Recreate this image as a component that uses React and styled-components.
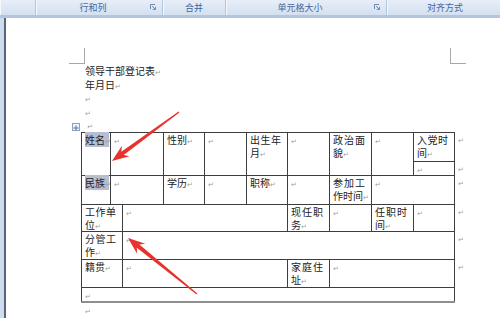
import React from 'react';
import styled, { createGlobalStyle } from 'styled-components';

const GlobalStyle = createGlobalStyle`
  html, body {
    margin: 0;
    padding: 0;
    background: #fff;
  }
  body {
    font-family: "Noto Sans CJK SC", "Noto Sans", sans-serif;
  }
`;

const Screen = styled.div`
  position: relative;
  width: 500px;
  height: 318px;
  overflow: hidden;
  display: flex;
  flex-direction: column;
  background: #fff;
`;

const Ribbon = styled.div`
  display: flex;
  flex-shrink: 0;
  height: 15px;
  background: linear-gradient(#e7eef8, #d4e0f0);
  border-bottom: 3px solid #b4c6de;
`;

const Group = styled.div`
  display: flex;
  flex-shrink: 0;
  width: ${p => p.$w}px;
  border-right: 1px solid #b5c6dc;
  box-shadow: inset 1px 0 0 #f5f8fd;
`;

const GroupLabel = styled.div`
  flex: 1;
  text-align: center;
  font-size: 9px;
  line-height: 15px;
  color: #45659a;
  white-space: nowrap;
`;

const Launcher = styled.div`
  width: 12px;
  padding-top: 3px;
  line-height: 0;
`;

const Workspace = styled.div`
  flex: 1;
  display: flex;
`;

const Rail = styled.div`
  width: 4px;
  flex-shrink: 0;
  background: #cfdbea;
  border-right: 2px solid #56657f;
`;

const Page = styled.div`
  flex: 1;
  display: flex;
  flex-direction: column;
  padding-top: 30px;
  background: #fff;
`;

const CornerRow = styled.div`
  display: flex;
  justify-content: space-between;
  width: 397px;
  height: 16px;
  margin-left: 63px;
`;

const CornerMark = styled.div`
  width: 15px;
  height: 15px;
  border-bottom: 1px solid #a8a8a8;
  ${p => (p.$side === 'left' ? 'border-right' : 'border-left')}: 1px solid #a8a8a8;
`;

const Para = styled.div`
  margin-left: 79px;
  height: 13.5px;
  font-size: 10px;
  line-height: 13.5px;
  color: #222;
  &:first-of-type {
    margin-top: 1px;
  }
`;

const Mark = styled.span`
  display: inline-block;
  width: 0;
  line-height: 0;
  overflow: visible;
  white-space: nowrap;
  font-family: "DejaVu Sans", sans-serif;
  font-size: 7px;
  color: #9e9e9e;
`;

const Highlight = styled.span`
  background: #b6bed1;
  white-space: nowrap;
  padding-right: 4px;
`;

const TableWrap = styled.div`
  position: relative;
  align-self: flex-start;
  margin-left: 75px;
`;

const Handle = styled.div`
  position: absolute;
  left: -9px;
  top: -9px;
  width: 6px;
  height: 6px;
  border: 1px solid #8ba1c6;
  background: #eef3fb;
  line-height: 0;
`;

const Table = styled.table`
  border-collapse: collapse;
  table-layout: fixed;
  width: 385px;
`;

const Row = styled.tr`
  height: ${p => p.$h}px;
`;

const Cell = styled.td`
  border: 1px solid #3d3d3d;
  ${p => p.$last && 'border-bottom: 2px solid #8e8e8e;'}
  padding: 0 6px 0 3px;
  vertical-align: top;
  font-size: 10px;
  line-height: 13px;
  color: #222;
  text-align: justify;
`;

const EndCell = styled.td`
  border: none;
  padding: 0 0 0 3px;
  vertical-align: top;
  font-size: 10px;
  line-height: 13px;
`;

const Overlay = styled.svg`
  position: absolute;
  left: 0;
  top: 0;
  pointer-events: none;
`;

const RET = '\u21B5';

function LauncherIcon() {
  return (
    <svg width="6" height="6" viewBox="0 0 6 6" fill="none" stroke="#7389b0" strokeWidth="1">
      <path d="M0.5 5V0.5H5" />
      <path d="M2 2L5.2 5.2M5.5 2.8V5.5H2.8" />
    </svg>
  );
}

function MoveIcon() {
  return (
    <svg width="6" height="6" viewBox="0 0 6 6" fill="none" stroke="#5670a0" strokeWidth="1">
      <path d="M3 0.5V5.5M0.5 3H5.5" />
    </svg>
  );
}

function Label({ text, selected, ...rest }) {
  return (
    <Cell {...rest}>
      {selected ? (
        <Highlight>
          {text}
          <Mark>{RET}</Mark>
        </Highlight>
      ) : (
        <>
          {text}
          <Mark>{RET}</Mark>
        </>
      )}
    </Cell>
  );
}

function Blank(props) {
  return (
    <Cell {...props}>
      <Mark>{RET}</Mark>
    </Cell>
  );
}

function RowEnd() {
  return (
    <EndCell>
      <Mark>{RET}</Mark>
    </EndCell>
  );
}

const colWidths = [29, 12, 41, 41, 42, 41, 42, 42, 42, 41, 12];

function arrowPoints(tx, ty, hx, hy) {
  const dx = hx - tx;
  const dy = hy - ty;
  const len = Math.hypot(dx, dy);
  const ux = dx / len;
  const uy = dy / len;
  const nx = -uy;
  const ny = ux;
  const bx = hx - ux * 17;
  const by = hy - uy * 17;
  const kx = hx - ux * 13;
  const ky = hy - uy * 13;
  const pts = [
    [tx + nx * 0.6, ty + ny * 0.6],
    [kx + nx * 2, ky + ny * 2],
    [bx + nx * 6.5, by + ny * 6.5],
    [hx, hy],
    [bx - nx * 6.5, by - ny * 6.5],
    [kx - nx * 2, ky - ny * 2],
    [tx - nx * 0.6, ty - ny * 0.6],
  ];
  return pts.map(p => p.map(v => v.toFixed(1)).join(',')).join(' ');
}

const arrows = [
  { tail: [179, 112], tip: [112, 161] },
  { tail: [197, 294], tip: [128, 238] },
];

export default function App() {
  return (
    <Screen>
      <GlobalStyle />
      <Ribbon>
        <Group $w={35}>
          <GroupLabel />
        </Group>
        <Group $w={126}>
          <GroupLabel>行和列</GroupLabel>
          <Launcher><LauncherIcon /></Launcher>
        </Group>
        <Group $w={62}>
          <GroupLabel>合并</GroupLabel>
        </Group>
        <Group $w={160}>
          <GroupLabel>单元格大小</GroupLabel>
          <Launcher><LauncherIcon /></Launcher>
        </Group>
        <Group $w={116}>
          <GroupLabel>对齐方式</GroupLabel>
        </Group>
        <Group $w={10}>
          <GroupLabel />
        </Group>
      </Ribbon>

      <Workspace>
        <Rail />
        <Page>
          <CornerRow>
            <CornerMark $side="left" />
            <CornerMark $side="right" />
          </CornerRow>
          <Para>领导干部登记表<Mark>{RET}</Mark></Para>
          <Para>年月日<Mark>{RET}</Mark></Para>
          <Para><Mark>{RET}</Mark></Para>
          <Para><Mark>{RET}</Mark></Para>
          <Para>&nbsp;<Mark>{RET}</Mark></Para>

          <TableWrap>
            <Handle><MoveIcon /></Handle>
            <Table>
              <colgroup>
                {colWidths.map((w, i) => (
                  <col key={i} style={{ width: w }} />
                ))}
              </colgroup>
              <tbody>
                <Row $h={29}>
                  <Label text="姓名" selected rowSpan={2} />
                  <Blank colSpan={2} rowSpan={2} />
                  <Label text="性别" rowSpan={2} />
                  <Blank rowSpan={2} />
                  <Label text="出生年月" rowSpan={2} />
                  <Blank rowSpan={2} />
                  <Label text="政治面貌" rowSpan={2} />
                  <Blank rowSpan={2} />
                  <Label text="入党时间" />
                  <RowEnd />
                </Row>
                <Row $h={13}>
                  <Blank />
                  <RowEnd />
                </Row>
                <Row $h={29}>
                  <Label text="民族" selected />
                  <Blank colSpan={2} />
                  <Label text="学历" />
                  <Blank />
                  <Label text="职称" />
                  <Blank />
                  <Label text="参加工作时间" />
                  <Blank colSpan={2} />
                  <RowEnd />
                </Row>
                <Row $h={27}>
                  <Label text="工作单位" colSpan={2} />
                  <Blank colSpan={4} />
                  <Label text="现任职务" />
                  <Blank />
                  <Label text="任职时间" />
                  <Blank />
                  <RowEnd />
                </Row>
                <Row $h={28}>
                  <Label text="分管工作" colSpan={2} />
                  <Blank colSpan={8} />
                  <RowEnd />
                </Row>
                <Row $h={28}>
                  <Label text="籍贯" colSpan={2} />
                  <Blank colSpan={4} />
                  <Label text="家庭住址" />
                  <Blank colSpan={3} />
                  <RowEnd />
                </Row>
                <Row $h={13}>
                  <Blank colSpan={10} $last />
                </Row>
              </tbody>
            </Table>
          </TableWrap>
          <Para><Mark>{RET}</Mark></Para>
        </Page>
      </Workspace>

      <Overlay width="500" height="318" viewBox="0 0 500 318">
        {arrows.map((a, i) => (
          <polygon
            key={i}
            points={arrowPoints(a.tail[0], a.tail[1], a.tip[0], a.tip[1])}
            fill="#e8322c"
          />
        ))}
      </Overlay>
    </Screen>
  );
}
